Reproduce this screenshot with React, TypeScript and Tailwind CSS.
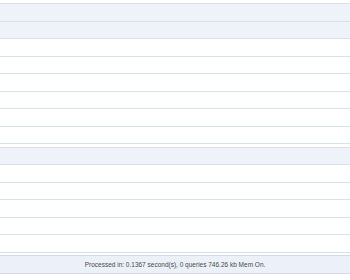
const topRows = 6;
const bottomRows = 5;

function Row({ blue = false }: { blue?: boolean }) {
  return (
    <div
      className={`h-[17.5px] border-b border-[#d9e2ec] ${blue ? "bg-[#eef3fa]" : "bg-white"}`}
    />
  );
}

export default function App() {
  return (
    <div className="h-[280px] w-[350px] overflow-hidden bg-white font-['Liberation_Sans',Arial,sans-serif]">
      <div className="pt-[3px]">
        <div className="border-t border-[#d9e2ec]">
          <Row blue />
          <Row blue />
          {Array.from({ length: topRows }).map((_, i) => (
            <Row key={i} />
          ))}
        </div>
      </div>
      <div className="mt-[2.5px] border-t border-[#d9e2ec]">
        <Row blue />
        {Array.from({ length: bottomRows }).map((_, i) => (
          <Row key={i} />
        ))}
      </div>
      <div className="mt-[2.5px] flex h-[19px] items-center justify-center border-y border-[#d2dbe8] bg-[#ebf0f9] text-[6.5px] text-[#4a4a4a]">
        Processed in: 0.1367 second(s), 0 queries 746.26 kb Mem On.
      </div>
    </div>
  );
}
